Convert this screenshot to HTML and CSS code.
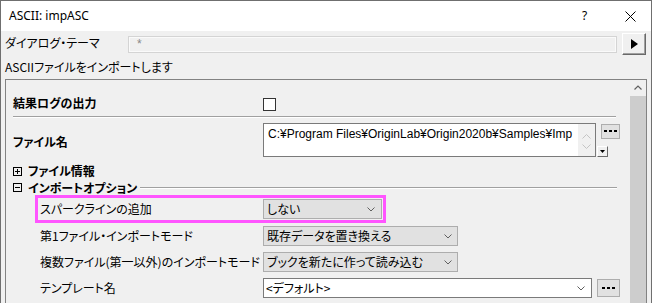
FILE: index.html
```html
<!DOCTYPE html>
<html lang="ja">
<head>
<meta charset="utf-8">
<title>ASCII: impASC</title>
<link rel="stylesheet" href="styles.css">
</head>
<body>
<div class="window">
  <div class="titlebar">
    <span class="title">ASCII: impASC</span>
    <span class="help">?</span>
    <svg class="close" width="11" height="11" viewBox="0 0 11 11"><path d="M0.5 0.5L10.5 10.5M10.5 0.5L0.5 10.5" stroke="#000" stroke-width="1" fill="none"/></svg>
  </div>
  <div class="content">
    <div class="theme-row">
      <span class="theme-label">ダイアログ・テーマ</span>
      <div class="theme-box">*</div>
      <div class="play-btn"><svg width="7" height="10" viewBox="0 0 7 10"><path d="M0 0L7 5L0 10Z" fill="#000"/></svg></div>
    </div>
    <div class="desc">ASCIIファイルをインポートします</div>
    <div class="panel">
      <div class="tree">
        <div class="row row-log">
          <span class="label bold">結果ログの出力</span>
          <span class="checkbox"></span>
        </div>
        <div class="sep"></div>
        <div class="row row-file">
          <span class="label bold file-label">ファイル名</span>
          <div class="file-group">
            <div class="file-box">
              <div class="file-text">C:¥Program Files¥OriginLab¥Origin2020b¥Samples¥Imp</div>
              <div class="file-scroll">
                <svg width="9" height="5" viewBox="0 0 9 5"><path d="M0.5 4.5L4.5 0.5L8.5 4.5" stroke="#c4c4c4" fill="none"/></svg>
                <svg width="9" height="5" viewBox="0 0 9 5"><path d="M0.5 0.5L4.5 4.5L8.5 0.5" stroke="#c4c4c4" fill="none"/></svg>
              </div>
            </div>
            <div class="side-col">
              <div class="dots-btn small"><svg width="13" height="3" viewBox="0 0 13 3"><rect x="0" y="0" width="3" height="2" fill="#000"/><rect x="5" y="0" width="3" height="2" fill="#000"/><rect x="10" y="0" width="3" height="2" fill="#000"/></svg></div>
              <div class="mini-drop"><svg width="5" height="3" viewBox="0 0 5 3"><path d="M0 0H5L2.5 3Z" fill="#000"/></svg></div>
            </div>
          </div>
        </div>
        <div class="row row-node">
          <svg class="node-icon" width="9" height="9" viewBox="0 0 9 9"><rect x="0.5" y="0.5" width="8" height="8" fill="none" stroke="#000"/><path d="M2 4.5H7M4.5 2V7" stroke="#000"/></svg>
          <span class="bold">ファイル情報</span>
        </div>
        <div class="row row-node row-node2">
          <svg class="node-icon" width="9" height="9" viewBox="0 0 9 9"><rect x="0.5" y="0.5" width="8" height="8" fill="none" stroke="#000"/><path d="M2 4.5H7" stroke="#000"/></svg>
          <span class="bold">インポートオプション</span>
          <span class="group-line"></span>
        </div>
        <div class="highlight">
          <div class="row sub-row-hl">
            <span class="hl-label">スパークラインの追加</span>
            <div class="dropdown dd-short"><span>しない</span><svg width="8" height="5" viewBox="0 0 8 5"><path d="M0.5 0.5L4 4L7.5 0.5" stroke="#606060" fill="none"/></svg></div>
          </div>
        </div>
        <div class="row sub-row">
          <span class="label sub-label">第1ファイル・インポートモード</span>
          <div class="dropdown dd-mid"><span>既存データを置き換える</span><svg width="8" height="5" viewBox="0 0 8 5"><path d="M0.5 0.5L4 4L7.5 0.5" stroke="#606060" fill="none"/></svg></div>
        </div>
        <div class="row sub-row">
          <span class="label sub-label">複数ファイル(第一以外)のインポートモード</span>
          <div class="dropdown dd-mid"><span>ブックを新たに作って読み込む</span><svg width="8" height="5" viewBox="0 0 8 5"><path d="M0.5 0.5L4 4L7.5 0.5" stroke="#606060" fill="none"/></svg></div>
        </div>
        <div class="row sub-row">
          <span class="label sub-label">テンプレート名</span>
          <div class="combo"><span>&lt;デフォルト&gt;</span><svg width="8" height="5" viewBox="0 0 8 5"><path d="M0.5 0.5L4 4L7.5 0.5" stroke="#606060" fill="none"/></svg></div>
          <div class="dots-btn large"><svg width="13" height="3" viewBox="0 0 13 3"><rect x="0" y="0" width="3" height="2" fill="#000"/><rect x="5" y="0" width="3" height="2" fill="#000"/><rect x="10" y="0" width="3" height="2" fill="#000"/></svg></div>
        </div>
      </div>
      <div class="vscroll">
        <div class="vs-up"><svg width="8" height="5" viewBox="0 0 8 5"><path d="M0.5 4.5L4 1L7.5 4.5" stroke="#606060" stroke-width="1.2" fill="none"/></svg></div>
        <div class="vs-thumb"></div>
      </div>
    </div>
  </div>
</div>
</body>
</html>
```
FILE: styles.css
```css
* { box-sizing: border-box; margin: 0; padding: 0; }
html, body { width: 652px; height: 303px; overflow: hidden; }
body {
  background: #f0f0f0;
  color: #000;
  font-family: "Noto Sans CJK JP", sans-serif;
  font-size: 12px;
  line-height: 16px;
  font-feature-settings: "palt";
}
.window {
  width: 652px;
  height: 303px;
  overflow: hidden;
  border: 1px solid #6f6f6f;
  border-bottom: none;
  display: flex;
  flex-direction: column;
  background: #f0f0f0;
}
.titlebar {
  height: 30px;
  flex: none;
  background: #fff;
  display: flex;
  align-items: center;
  padding-left: 8px;
}
.title {
  flex: 1;
  font-family: "Noto Sans", sans-serif;
  font-size: 12px;
  font-feature-settings: normal;
}
.help {
  font-family: "Noto Sans", sans-serif;
  font-size: 12px;
  width: 7px;
  margin-right: 36px;
}
.close { margin-right: 15px; }
.content {
  flex: 1;
  display: flex;
  flex-direction: column;
  padding: 0 4px;
  min-height: 0;
}
.theme-row {
  height: 22px;
  margin-top: 2px;
  display: flex;
  align-items: center;
  flex: none;
}
.theme-label { width: 123px; margin-top: -2px; }
.theme-box {
  width: 489px;
  height: 17px;
  border: 1px solid #d4d4d4;
  box-shadow: inset 0 0 0 1px #fafafa;
  background: #f0f0f0;
  color: #888;
  padding-left: 8px;
  font-family: "Liberation Sans", sans-serif;
  font-size: 12px;
  line-height: 15px;
}
.play-btn {
  width: 24px;
  height: 22px;
  margin-left: 5px;
  background: #f0f0f0;
  border-top: 1px solid #fff;
  border-left: 1px solid #fff;
  border-right: 1px solid #696969;
  border-bottom: 1px solid #696969;
  box-shadow: inset -1px -1px 0 #a0a0a0;
  display: flex;
  align-items: center;
  justify-content: center;
}
.desc { height: 24px; line-height: 24px; flex: none; }
.panel {
  flex: 1;
  display: flex;
  border: 1px solid #828282;
  border-bottom: none;
  min-height: 0;
  overflow: hidden;
}
.tree {
  flex: 1;
  padding-top: 9px;
  display: flex;
  flex-direction: column;
}
.row { display: flex; align-items: center; flex: none; }
.label { width: 257px; padding-left: 7px; flex: none; white-space: nowrap; }
.bold { font-weight: 700; }
.row-log { height: 27px; }
.checkbox {
  width: 13px;
  height: 13px;
  border: 1px solid #333;
  background: #fff;
  margin-top: 3px;
}
.sep {
  flex: none;
  margin-left: 7px;
  width: 603px;
  height: 2px;
  border-top: 1px solid #a0a0a0;
  border-bottom: 1px solid #fff;
}
.row-file { height: 44px; align-items: flex-start; }
.file-label { margin-top: 16px; }
.file-group { display: flex; margin-top: 5px; }
.file-box {
  width: 333px;
  height: 34px;
  border: 1px solid #7a7a7a;
  background: #fff;
  display: flex;
}
.file-text {
  flex: 1;
  overflow: hidden;
  white-space: nowrap;
  padding: 3px 0 0 4px;
  font-family: "Liberation Sans", sans-serif;
  font-size: 12px;
  line-height: 14px;
  font-feature-settings: normal;
}
.file-scroll {
  width: 17px;
  background: #f0f0f0;
  display: flex;
  flex-direction: column;
  align-items: center;
  justify-content: space-between;
  padding: 10px 0 7px;
}
.side-col { display: flex; flex-direction: column; margin-left: 1px; }
.dots-btn {
  background: #e1e1e1;
  border: 1px solid #adadad;
  display: flex;
  align-items: center;
  justify-content: center;
}
.dots-btn.small { width: 19px; height: 15px; margin-left: 4px; margin-top: 1px; }
.dots-btn.large { width: 23px; height: 18px; margin-left: 5px; }
.mini-drop {
  width: 11px;
  height: 11px;
  margin-top: 7px;
  background: #f0f0f0;
  border-top: 1px solid #fff;
  border-left: 1px solid #fff;
  border-right: 1px solid #696969;
  border-bottom: 1px solid #696969;
  display: flex;
  align-items: center;
  justify-content: center;
}
.row-node { height: 18px; padding-left: 7px; }
.row-node2 { height: 15px; }
.node-icon { margin-right: 6px; flex: none; }
.group-line {
  flex: 1;
  height: 2px;
  margin: 1px 12px 0 3px;
  border-top: 1px solid #a0a0a0;
  border-bottom: 1px solid #fff;
}
.highlight {
  flex: none;
  margin-left: 29px;
  width: 351px;
  height: 28px;
  border: 3px solid #ff55ff;
}
.sub-row-hl { height: 22px; }
.hl-label { width: 225px; padding-left: 2px; white-space: nowrap; }
.sub-row { height: 26px; }
.sub-label { padding-left: 34px; }
.dropdown {
  height: 20px;
  background: #e1e1e1;
  border: 1px solid #adadad;
  display: flex;
  align-items: center;
  justify-content: space-between;
  padding: 0 5px 0 3px;
}
.dd-short { width: 119px; padding-right: 6px; }
.dd-mid { width: 195px; }
.combo {
  width: 329px;
  height: 20px;
  background: #fff;
  border: 1px solid #7a7a7a;
  display: flex;
  align-items: center;
  justify-content: space-between;
  padding: 0 6px 0 2px;
}
.vscroll {
  width: 17px;
  flex: none;
  background: #f0f0f0;
  display: flex;
  flex-direction: column;
}
.vs-up {
  height: 16px;
  flex: none;
  display: flex;
  align-items: center;
  justify-content: center;
  padding-bottom: 1px;
}
.vs-thumb {
  flex: 1;
  margin-left: 1px;
  background: #cdcdcd;
}
```
